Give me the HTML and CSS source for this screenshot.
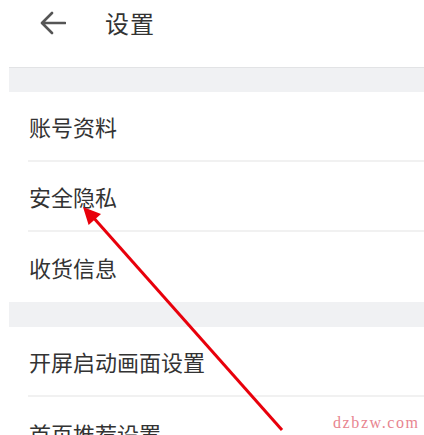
FILE: index.html
```html
<!DOCTYPE html>
<html lang="zh">
<head>
<meta charset="utf-8">
<title>设置</title>
<link rel="stylesheet" href="styles.css">
</head>
<body>
<div class="page">
  <header class="header">
    <svg class="back" width="26" height="24" viewBox="0 0 26 24">
      <path d="M25 12 H3 M12 2 L2 12 L12 22" fill="none" stroke="#555" stroke-width="2.6" stroke-linecap="round" stroke-linejoin="round"/>
    </svg>
    <h1 class="title">设置</h1>
  </header>
  <div class="band band-top"></div>
  <ul class="list">
    <li class="row"><span>账号资料</span></li>
    <li class="row"><span>安全隐私</span></li>
    <li class="row last"><span>收货信息</span></li>
  </ul>
  <div class="band"></div>
  <ul class="list">
    <li class="row"><span>开屏启动画面设置</span></li>
    <li class="row"><span class="low">首页推荐设置</span></li>
  </ul>
</div>
<svg class="pointer" width="424" height="435" viewBox="0 0 424 435">
  <line x1="92" y1="216" x2="282" y2="430" stroke="#e8000b" stroke-width="3"/>
  <polygon points="83,207 88.6,225 101,214" fill="#e8000b"/>
</svg>
<div class="watermark">dzbzw.com</div>
</body>
</html>
```

FILE: styles.css
```css
html, body {
  margin: 0;
  padding: 0;
  background: #ffffff;
  overflow: hidden;
}
body {
  width: 424px;
  height: 435px;
  position: relative;
  font-family: "Noto Sans CJK SC", "Noto Sans", sans-serif;
  color: #333333;
}
.page {
  margin-left: 9px;
  height: 435px;
  overflow: hidden;
}
.header {
  height: 67px;
  display: flex;
  align-items: center;
  padding-left: 31px;
  box-sizing: border-box;
  padding-bottom: 21px;
}
.back {
  display: block;
  width: 26px;
  height: 24px;
}
.title {
  margin: 0 0 0 39px;
  font-size: 24px;
  font-weight: 400;
  line-height: 28px;
  color: #333;
  letter-spacing: 1px;
}
.band {
  height: 25px;
  background: #f0f1f3;
}
.band-top {
  border-top: 1px solid #e2e3e5;
  height: 24px;
}
.list {
  list-style: none;
  margin: 0;
  padding: 0 0 0 19px;
}
.row {
  height: 70px;
  display: flex;
  align-items: center;
  border-bottom: 2px solid #f1f1f1;
  box-sizing: border-box;
  font-size: 22px;
  color: #333;
  padding-left: 1px;
}
.row.last {
  border-bottom: none;
}
.row .low {
  position: relative;
  top: 2px;
}
.pointer {
  position: absolute;
  left: 0;
  top: 0;
}
.watermark {
  position: absolute;
  left: 333px;
  top: 415px;
  font-family: "Liberation Serif", serif;
  font-size: 16px;
  line-height: 16px;
  letter-spacing: 1.6px;
  color: #e8848f;
}
```
